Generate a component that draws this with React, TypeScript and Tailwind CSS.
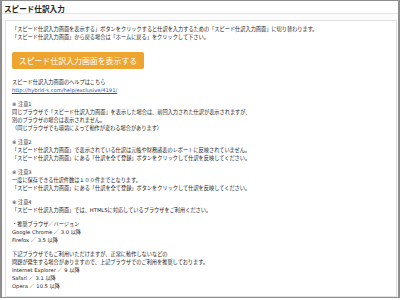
import React from "react";

const P = ({ children, className = "" }: { children: React.ReactNode; className?: string }) => (
  <div className={"mb-[6px] " + className}>{children}</div>
);

export default function App() {
  return (
    <div
      className="w-[400px] h-[300px] overflow-hidden bg-white"
      style={{ fontFamily: '"DejaVu Sans", "Noto Sans CJK JP", sans-serif' }}
    >
      <div className="w-[400px] h-[298px] border-x-2 border-y border-[#8e8e8e] bg-[#fbfbfb] flex flex-col overflow-hidden">
        <div className="h-[21px] border-b border-[#e2e2e2] flex items-center pl-[2px] pt-[4px] bg-white">
          <span className="text-[7.6px] font-bold text-[#222] leading-none" style={{ fontFamily: '"Noto Sans CJK JP", sans-serif' }}>
            スピード仕訳入力
          </span>
        </div>
        <div className="mt-[6px] ml-[3px] mr-[1px] flex-1 border border-[#e0e0e0] bg-white pl-[6px] pt-[4px] text-[5.2px] leading-[8px] text-[#222]">
          <P>
            <div>「スピード仕訳入力画面を表示する」ボタンをクリックすると仕訳を入力するための「スピード仕訳入力画面」に切り替わります。</div>
            <div>「スピード仕訳入力画面」から戻る場合は「ホームに戻る」をクリックして下さい。</div>
          </P>
          <div className="mt-[11px] mb-[9px] w-[132px] h-[17px] rounded-[2px] bg-[#eea52f] flex items-center justify-center">
            <span className="text-white text-[7.9px] leading-none" style={{ fontFamily: '"Noto Sans CJK JP", sans-serif' }}>
              スピード仕訳入力画面を表示する
            </span>
          </div>
          <P>
            <div>スピード仕訳入力画面のヘルプはこちら</div>
            <div className="text-[#2a55b5] underline">http://hybrid-s.com/help/exclusive/4191/</div>
          </P>
          <P>
            <div>※ 注意1</div>
            <div>同じブラウザで「スピード仕訳入力画面」を表示した場合は、前回入力された仕訳が表示されますが、</div>
            <div>別のブラウザの場合は表示されません。</div>
            <div>（同じブラウザでも環境によって動作が変わる場合があります）</div>
          </P>
          <P>
            <div>※ 注意2</div>
            <div>「スピード仕訳入力画面」で表示されている仕訳は元帳や財務諸表のレポートに反映されていません。</div>
            <div>「スピード仕訳入力画面」にある「仕訳を全て登録」ボタンをクリックして仕訳を反映してください。</div>
          </P>
          <P>
            <div>※ 注意3</div>
            <div>一度に保存できる仕訳件数は１００件までとなります。</div>
            <div>「スピード仕訳入力画面」にある「仕訳を全て登録」ボタンをクリックして仕訳を反映してください。</div>
          </P>
          <P>
            <div>※ 注意4</div>
            <div>「スピード仕訳入力画面」では、HTML5に対応しているブラウザをご利用ください。</div>
          </P>
          <P>
            <div>・推奨ブラウザ／バージョン</div>
            <div>Google Chrome ／ 3.0 以降</div>
            <div>Firefox ／ 3.5 以降</div>
          </P>
          <P>
            <div>下記ブラウザでもご利用いただけますが、正常に動作しないなどの</div>
            <div>問題が発生する場合がありますので、上記ブラウザでのご利用を推奨しております。</div>
            <div>Internet Explorer ／ 9 以降</div>
            <div>Safari ／ 3.1 以降</div>
            <div>Opera ／ 10.5 以降</div>
          </P>
        </div>
      </div>
    </div>
  );
}
